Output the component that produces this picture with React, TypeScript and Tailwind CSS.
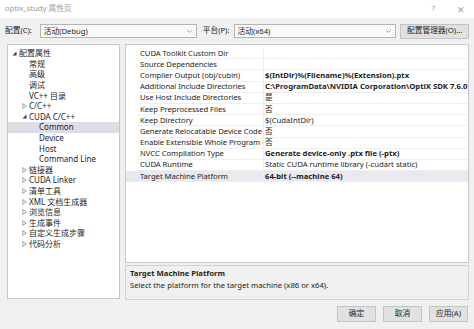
import React from 'react';

const FONT = '"Noto Sans", "Open Sans", "Noto Sans CJK SC", sans-serif';

type TreeItem = { label: string; level: number; expander?: 'open' | 'closed'; selected?: boolean };

const tree: TreeItem[] = [
  { label: '配置属性', level: 0, expander: 'open' },
  { label: '常规', level: 1 },
  { label: '高级', level: 1 },
  { label: '调试', level: 1 },
  { label: 'VC++ 目录', level: 1 },
  { label: 'C/C++', level: 1, expander: 'closed' },
  { label: 'CUDA C/C++', level: 1, expander: 'open' },
  { label: 'Common', level: 2, selected: true },
  { label: 'Device', level: 2 },
  { label: 'Host', level: 2 },
  { label: 'Command Line', level: 2 },
  { label: '链接器', level: 1, expander: 'closed' },
  { label: 'CUDA Linker', level: 1, expander: 'closed' },
  { label: '清单工具', level: 1, expander: 'closed' },
  { label: 'XML 文档生成器', level: 1, expander: 'closed' },
  { label: '浏览信息', level: 1, expander: 'closed' },
  { label: '生成事件', level: 1, expander: 'closed' },
  { label: '自定义生成步骤', level: 1, expander: 'closed' },
  { label: '代码分析', level: 1, expander: 'closed' },
];

const props: { name: string; value: string; bold?: boolean; selected?: boolean }[] = [
  { name: 'CUDA Toolkit Custom Dir', value: '' },
  { name: 'Source Dependencies', value: '' },
  { name: 'Compiler Output (obj/cubin)', value: '$(IntDir)%(Filename)%(Extension).ptx', bold: true },
  { name: 'Additional Include Directories', value: 'C:\\ProgramData\\NVIDIA Corporation\\OptiX SDK 7.6.0\\include', bold: true },
  { name: 'Use Host Include Directories', value: '是' },
  { name: 'Keep Preprocessed Files', value: '否' },
  { name: 'Keep Directory', value: '$(CudaIntDir)' },
  { name: 'Generate Relocatable Device Code', value: '否' },
  { name: 'Enable Extensible Whole Program Compilation', value: '否' },
  { name: 'NVCC Compilation Type', value: 'Generate device-only .ptx file (-ptx)', bold: true },
  { name: 'CUDA Runtime', value: 'Static CUDA runtime library (-cudart static)' },
  { name: 'Target Machine Platform', value: '64-bit (--machine 64)', bold: true, selected: true },
];

function Expander({ kind }: { kind: 'open' | 'closed' }) {
  if (kind === 'open') {
    return (
      <svg width="5" height="5" viewBox="0 0 5 5" className="shrink-0">
        <path d="M4.5 0.5 L4.5 4.5 L0.5 4.5 Z" fill="#3c3c3c" />
      </svg>
    );
  }
  return (
    <svg width="5" height="6" viewBox="0 0 5 6" className="shrink-0">
      <path d="M0.75 0.6 L4.3 3 L0.75 5.4 Z" fill="none" stroke="#8a8a8a" strokeWidth="0.8" />
    </svg>
  );
}

function Combo({ text, width }: { text: string; width: string }) {
  return (
    <div className={`${width} h-[14px] bg-[#f9f9f9] border border-[#b4b4b4] flex items-center pl-[3px] pr-[4px]`}>
      <span className="flex-1 whitespace-nowrap leading-[12px]">{text}</span>
      <svg width="5" height="3" viewBox="0 0 5 3">
        <path d="M0.3 0.3 L2.5 2.5 L4.7 0.3" fill="none" stroke="#777" strokeWidth="0.7" />
      </svg>
    </div>
  );
}

function Button({ label }: { label: string }) {
  return (
    <div className="w-[39px] h-[16px] bg-[#e1e1e1] border border-[#c4c4c4] flex items-center justify-center">
      {label}
    </div>
  );
}

export default function App() {
  return (
    <div
      className="w-[474px] h-[329px] bg-[#f0f0f0] flex flex-col overflow-hidden text-[7.7px] leading-none text-[#1e1e1e]"
      style={{ fontFamily: FONT }}
    >
      {/* title bar */}
      <div className="h-[18px] bg-white flex items-center pl-[5px] pr-[9px] text-[#9a9a9a]">
        <span className="flex-1">optix_study 属性页</span>
        <span className="mr-[22px]">?</span>
        <span className="text-[9px]">✕</span>
      </div>

      {/* toolbar */}
      <div className="h-[26px] flex items-center pl-[5px] pr-[5px]">
        <span className="w-[35px]">配置(C):</span>
        <Combo text="活动(Debug)" width="w-[158px]" />
        <span className="ml-[6px] w-[31px]">平台(P):</span>
        <Combo text="活动(x64)" width="w-[164px]" />
        <div className="ml-[4px] w-[69px] h-[15px] bg-[#e1e1e1] border border-[#c4c4c4] flex items-center justify-center">
          配置管理器(O)...
        </div>
      </div>

      {/* main */}
      <div className="flex pl-[7px]">
        {/* tree */}
        <div className="w-[113px] h-[255px] bg-white border border-[#c8c8c8] pt-[3px]">
          {tree.map((t, i) => (
            <div
              key={i}
              className={`h-[10.6px] flex items-center ${t.selected ? 'bg-[#dcdde6]' : ''}`}
              style={{ paddingLeft: 4 + t.level * 10 }}
            >
              <span className="w-[7px] flex items-center">{t.expander && <Expander kind={t.expander} />}</span>
              <span className="text-[8px]">{t.label}</span>
            </div>
          ))}
        </div>

        {/* right side */}
        <div className="ml-[5px] w-[344px] flex flex-col">
          <div className="h-[219px] bg-white border border-[#c8c8c8] pt-[3px] overflow-hidden">
            {props.map((p, i) => (
              <div key={i} className={`h-[11.2px] flex ${p.selected ? 'bg-[#e8e9ef]' : ''}`}>
                <div className="w-[12px] shrink-0" />
                <div className="w-[125px] shrink-0 flex items-center pl-[2px] border-b border-[#efefef] overflow-hidden whitespace-nowrap leading-[11px] tracking-[-0.05px]">
                  {p.name}
                </div>
                <div
                  className={`flex-1 flex items-center pl-[1px] border-b border-l border-[#efefef] overflow-hidden whitespace-nowrap leading-[11px] ${
                    p.bold ? 'font-bold' : ''
                  }`}
                >
                  {p.value}
                </div>
              </div>
            ))}
          </div>
          <div className="mt-[2px] h-[35px] bg-[#f0f0f0] border border-[#d2d2d2] pl-[4px] pt-[4px] flex flex-col gap-[4px]">
            <span className="font-bold">Target Machine Platform</span>
            <span>Select the platform for the target machine (x86 or x64).</span>
          </div>
        </div>
      </div>

      {/* buttons */}
      <div className="flex justify-end gap-[7px] pr-[6px] mt-[6px]">
        <Button label="确定" />
        <Button label="取消" />
        <Button label="应用(A)" />
      </div>
    </div>
  );
}
